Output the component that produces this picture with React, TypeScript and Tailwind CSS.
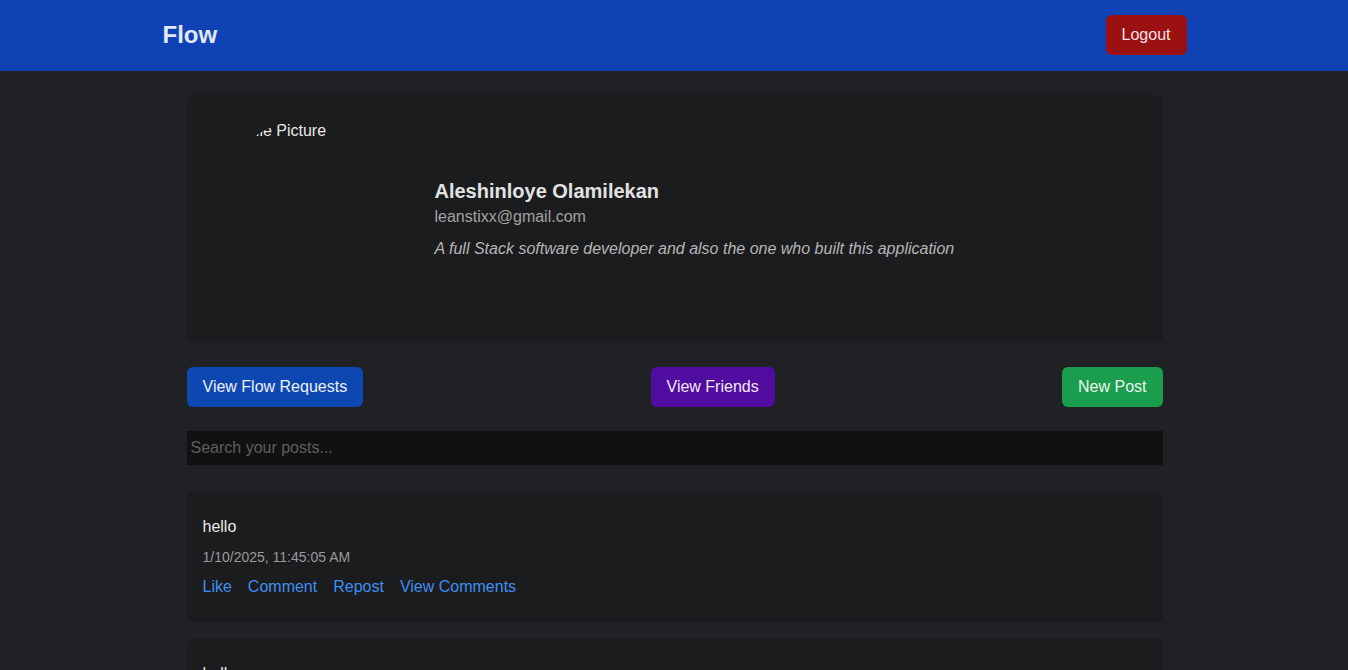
import React from 'react'

const posts = [
  { id: 1, text: 'hello', date: '1/10/2025, 11:45:05 AM' },
  { id: 2, text: 'hello', date: '1/10/2025, 11:44:51 AM' },
]

export default function App() {
  return (
    <div className="min-h-screen bg-[#202124] pl-px font-['Liberation_Sans',Arial,sans-serif] text-[#e5e5e5]">
      <header className="bg-[#0f43b5] h-[71px] -ml-px pl-px">
        <div className="max-w-5xl mx-auto h-full flex items-center justify-between">
          <h1 className="text-2xl font-bold text-[#e3e8f4] mt-[-2px]">Flow</h1>
          <button className="bg-[#9b1010] text-[#f1e4e4] px-4 py-2 rounded-md mt-[-2px]">Logout</button>
        </div>
      </header>

      <main className="max-w-5xl mx-auto px-6 pt-6 pb-10">
        <section className="bg-[#1b1c1e] rounded-lg p-6 flex items-center gap-6">
          <div className="w-[200px] h-[200px] rounded-full overflow-hidden shrink-0">
            <div className="pl-4 whitespace-nowrap text-[#e8e8e8]">Profile Picture</div>
          </div>
          <div>
            <h2 className="text-xl font-bold text-[#e2e2e2]">Aleshinloye Olamilekan</h2>
            <p className="text-[#a3a3a3]">leanstixx@gmail.com</p>
            <p className="mt-2 italic text-[#b5b5b5]">A full Stack software developer and also the one who built this application</p>
          </div>
        </section>

        <div className="mt-6 flex items-center justify-between">
          <button className="bg-[#0c47b2] text-[#eef1f8] px-4 py-2 rounded-md">View Flow Requests</button>
          <button className="bg-[#510ca0] text-[#f0e8f6] px-4 py-2 rounded-md">View Friends</button>
          <button className="bg-[#1a9d4c] text-[#eaf5ee] px-4 py-2 rounded-md">New Post</button>
        </div>

        <input
          type="text"
          placeholder="Search your posts..."
          className="mt-6 w-full bg-[#111111] px-1 py-[5px] text-[#e5e5e5] placeholder-[#5f5f5f] outline-none"
        />

        <div className="mt-[26px] flex flex-col gap-4">
          {posts.map((p) => (
            <div key={p.id} className="bg-[#1b1c1e] rounded-lg px-4 pt-6 pb-[23px]">
              <p className="text-[#e8e8e8]">{p.text}</p>
              <p className="mt-2 text-sm text-[#9a9a9a]">{p.date}</p>
              <div className="mt-2 flex gap-4 text-[#3f8ef2]">
                <button>Like</button>
                <button>Comment</button>
                <button>Repost</button>
                <button>View Comments</button>
              </div>
            </div>
          ))}
        </div>
      </main>
    </div>
  )
}
